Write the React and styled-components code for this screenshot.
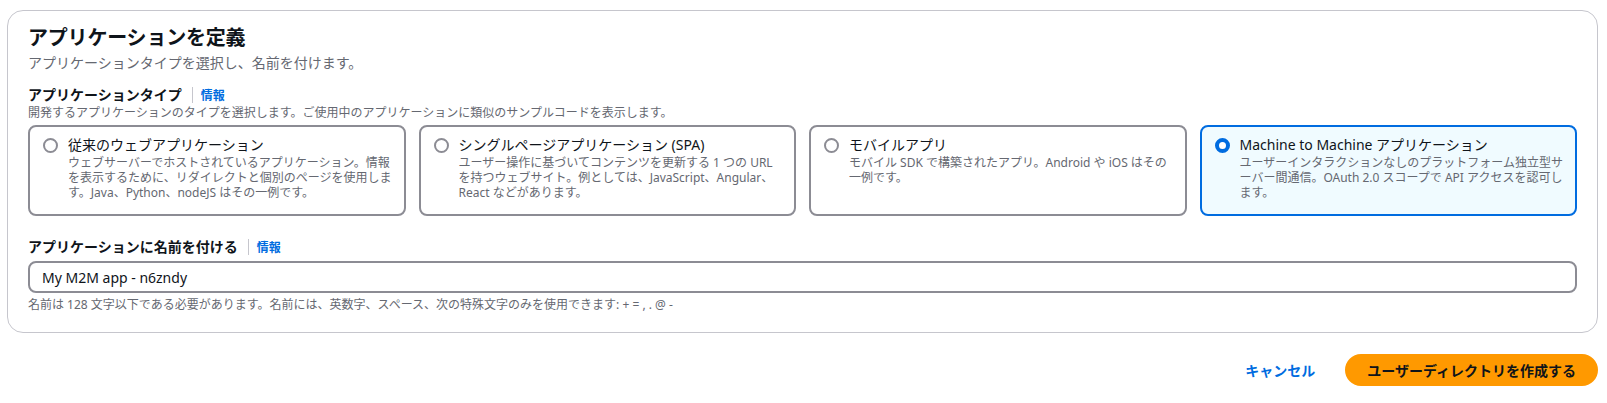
import React, {useState} from 'react';
import styled, {createGlobalStyle} from 'styled-components';

const GlobalStyle = createGlobalStyle`
    body {
        margin: 0;
        background: #fff;
        font-family: "Noto Sans", "Noto Sans CJK JP", sans-serif;
        color: #0f141a;
    }
`;

const Page = styled.div`
    padding: 10px 9px 0 7px;
`;

const Container = styled.div`
    border: 1px solid #c6c6cd;
    border-radius: 16px;
    padding: 15px 20px 19px 20px;
`;

const Heading = styled.h2`
    margin: 0;
    font-size: 20px;
    line-height: 24px;
    font-weight: 700;
    letter-spacing: -0.2px;
`;

const Subtitle = styled.p`
    margin: 3px 0 0 0;
    font-size: 14px;
    line-height: 20px;
    color: #656871;
`;

const Field = styled.div`
    margin-top: ${p => p.$top}px;
`;

const LabelRow = styled.div`
    display: flex;
    align-items: center;
    height: 20px;
`;

const Label = styled.span`
    font-size: 14px;
    font-weight: 700;
    line-height: 20px;
`;

const Divider = styled.span`
    width: 1px;
    height: 16px;
    background: #c6c6cd;
    margin: 0 8px 0 10px;
`;

const InfoLink = styled.a`
    font-size: 12px;
    font-weight: 700;
    color: #006ce0;
    text-decoration: none;
    cursor: pointer;
`;

const Hint = styled.div`
    font-size: 12px;
    line-height: 16px;
    color: #656871;
    margin-top: ${p => p.$top || 0}px;
`;

const Tiles = styled.div`
    display: grid;
    grid-template-columns: repeat(4, 1fr);
    gap: 13px;
    margin-top: 4px;
`;

const Tile = styled.label`
    display: flex;
    align-items: flex-start;
    gap: 10px;
    padding: 8px 8px 14px 13px;
    border: 2px solid ${p => (p.$checked ? '#006ce0' : '#8c8c94')};
    background: ${p => (p.$checked ? '#f0fbff' : '#fff')};
    border-radius: 8px;
    cursor: pointer;
`;

const Radio = styled.span`
    flex: none;
    box-sizing: border-box;
    width: 15px;
    height: 15px;
    margin-top: 3px;
    border-radius: 50%;
    background: #fff;
    border: ${p => (p.$checked ? '4.5px solid #006ce0' : '2px solid #8c8c94')};
`;

const TileText = styled.div`
    flex: 1;
    min-width: 0;
`;

const TileTitle = styled.div`
    font-size: 14px;
    line-height: 20px;
    color: #0f141a;
`;

const TileDesc = styled.div`
    font-size: 12px;
    line-height: 15px;
    color: #656871;
`;

const Input = styled.input`
    display: block;
    box-sizing: border-box;
    width: 100%;
    height: 32px;
    margin-top: 4px;
    padding: 0 12px;
    border: 2px solid #8c8c94;
    border-radius: 8px;
    font-family: inherit;
    font-size: 14px;
    color: #0f141a;
    outline: none;
`;

const Actions = styled.div`
    display: flex;
    justify-content: flex-end;
    gap: 8px;
    margin-top: 21px;
`;

const Button = styled.button`
    box-sizing: border-box;
    height: 32px;
    padding: 0 20px;
    border-radius: 16px;
    border: 2px solid ${p => (p.$primary ? '#ff9900' : 'transparent')};
    background: ${p => (p.$primary ? '#ff9900' : 'transparent')};
    color: ${p => (p.$primary ? '#0f141a' : '#006ce0')};
    font-family: inherit;
    font-size: 14px;
    font-weight: 700;
    cursor: pointer;
`;

const types = [
    {
        id: 'web',
        title: '従来のウェブアプリケーション',
        desc: 'ウェブサーバーでホストされているアプリケーション。情報を表示するために、リダイレクトと個別のページを使用します。Java、Python、nodeJS はその一例です。',
    },
    {
        id: 'spa',
        title: 'シングルページアプリケーション (SPA)',
        desc: 'ユーザー操作に基づいてコンテンツを更新する 1 つの URL を持つウェブサイト。例としては、JavaScript、Angular、React などがあります。',
    },
    {
        id: 'mobile',
        title: 'モバイルアプリ',
        desc: 'モバイル SDK で構築されたアプリ。Android や iOS はその一例です。',
    },
    {
        id: 'm2m',
        title: 'Machine to Machine アプリケーション',
        desc: 'ユーザーインタラクションなしのプラットフォーム独立型サーバー間通信。OAuth 2.0 スコープで API アクセスを認可します。',
    },
];

export default function App() {
    const [selected, setSelected] = useState('m2m');
    const [name, setName] = useState('My M2M app - n6zndy');

    return (
        <Page>
            <GlobalStyle />
            <Container>
                <Heading>アプリケーションを定義</Heading>
                <Subtitle>アプリケーションタイプを選択し、名前を付けます。</Subtitle>

                <Field $top={12}>
                    <LabelRow>
                        <Label>アプリケーションタイプ</Label>
                        <Divider />
                        <InfoLink>情報</InfoLink>
                    </LabelRow>
                    <Hint>開発するアプリケーションのタイプを選択します。ご使用中のアプリケーションに類似のサンプルコードを表示します。</Hint>
                    <Tiles>
                        {types.map(t => (
                            <Tile
                                key={t.id}
                                $checked={selected === t.id}
                                onClick={() => setSelected(t.id)}
                            >
                                <Radio $checked={selected === t.id} />
                                <TileText>
                                    <TileTitle>{t.title}</TileTitle>
                                    <TileDesc>{t.desc}</TileDesc>
                                </TileText>
                            </Tile>
                        ))}
                    </Tiles>
                </Field>

                <Field $top={21}>
                    <LabelRow>
                        <Label>アプリケーションに名前を付ける</Label>
                        <Divider />
                        <InfoLink>情報</InfoLink>
                    </LabelRow>
                    <Input value={name} onChange={e => setName(e.target.value)} />
                    <Hint $top={4}>
                        名前は 128 文字以下である必要があります。名前には、英数字、スペース、次の特殊文字のみを使用できます: + = , . @ -
                    </Hint>
                </Field>
            </Container>
            <Actions>
                <Button>キャンセル</Button>
                <Button $primary>ユーザーディレクトリを作成する</Button>
            </Actions>
        </Page>
    );
}
